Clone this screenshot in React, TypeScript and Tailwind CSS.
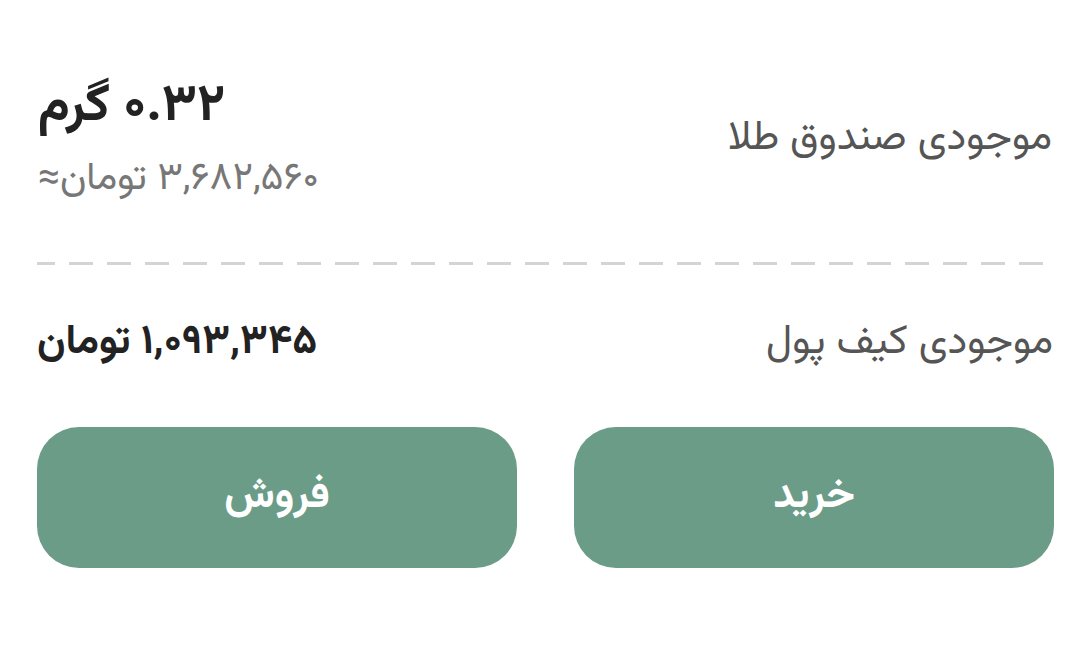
import React from "react";

export default function App() {
  const font = { fontFamily: '"Vazirmatn", "DejaVu Sans", "Noto Sans", sans-serif' };
  return (
    <div dir="rtl" className="w-[1080px] h-[655px] bg-white overflow-hidden" style={font}>
      <div className="pl-[37px] pr-[27px] pt-[82px]">
        <div className="flex justify-between items-start pl-[1px] pr-[1px]">
          <div className="text-[41px] text-[#555555] mt-[37px] leading-none">موجودی صندوق طلا</div>
          <div className="flex flex-col items-end">
            <div className="text-[52px] font-bold text-[#222222] leading-none">۰.۳۲ گرم</div>
            <div className="text-[39px] text-[#777777] mt-[26px] leading-none">۳,۶۸۲,۵۶۰ تومان≈</div>
          </div>
        </div>
        <div className="mt-[63px] ml-0 mr-[10px] h-[3px]" style={{ backgroundImage: "repeating-linear-gradient(to left, #d4d4d4 0 24px, transparent 24px 38px)" }} />
        <div className="flex justify-between items-center mt-[58px]">
          <div className="text-[41px] text-[#555555] leading-none">موجودی کیف پول</div>
          <div className="text-[41px] font-bold text-[#222222] leading-none">۱,۰۹۳,۳۴۵ تومان</div>
        </div>
        <div className="flex gap-[57px] mt-[63px] ml-0 -mr-[1px]">
          <button className="flex-1 h-[141px] rounded-[42px] bg-[#6a9c88] text-white text-[42px] font-bold flex items-center justify-center">خرید</button>
          <button className="flex-1 h-[141px] rounded-[42px] bg-[#6a9c88] text-white text-[42px] font-bold flex items-center justify-center">فروش</button>
        </div>
      </div>
    </div>
  );
}
